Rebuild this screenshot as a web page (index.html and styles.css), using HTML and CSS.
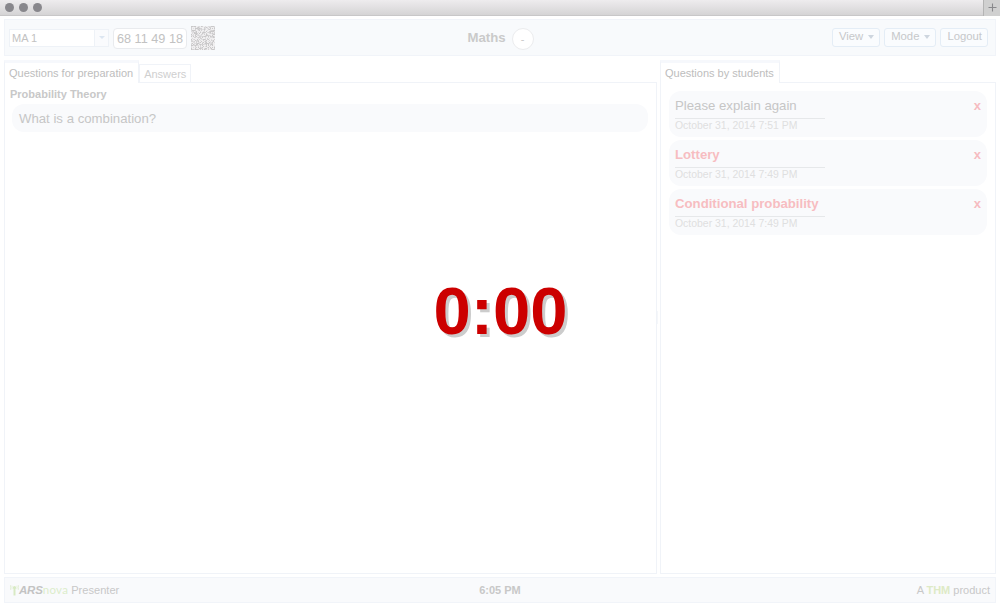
FILE: index.html
```html
<!DOCTYPE html>
<html lang="en">
<head>
<meta charset="utf-8">
<title>ARSnova Presenter</title>
<link rel="stylesheet" href="styles.css">
</head>
<body>
<div class="window">
  <div class="titlebar">
    <span class="dot"></span><span class="dot"></span><span class="dot"></span>
    <span class="newtab"><svg width="9" height="9" viewBox="0 0 9 9"><path d="M4.5 0.5V8.5M0.5 4.5H8.5" stroke="#88888b" stroke-width="1.1"/></svg></span>
  </div>
  <header class="bar header">
    <div class="session">
      <div class="select"><span class="value">MA 1</span><span class="arrow"><i class="caret small"></i></span></div>
      <div class="key">68 11 49 18</div>
      <svg class="qr" id="qr" width="24" height="24" viewBox="0 0 24 24" shape-rendering="crispEdges"></svg>
    </div>
    <div class="title"><b>Maths</b><span class="count">-</span></div>
    <nav class="actions">
      <button class="btn">View<i class="caret"></i></button>
      <button class="btn">Mode<i class="caret"></i></button>
      <button class="btn">Logout</button>
    </nav>
  </header>
  <main class="main">
    <section class="pane left">
      <div class="tabs"><div class="tab active">Questions for preparation</div><div class="tab idle">Answers</div></div>
      <div class="body">
        <h2 class="subject">Probability Theory</h2>
        <div class="question">What is a combination?</div>
      </div>
    </section>
    <div class="splitter"></div>
    <section class="pane right">
      <div class="tabs"><div class="tab active">Questions by students</div></div>
      <div class="body list">
        <article class="card"><div class="row"><span>Please explain again</span><b class="x">x</b></div><div class="date">October 31, 2014 7:51 PM</div></article>
        <article class="card unread"><div class="row"><span>Lottery</span><b class="x">x</b></div><div class="date">October 31, 2014 7:49 PM</div></article>
        <article class="card unread"><div class="row"><span>Conditional probability</span><b class="x">x</b></div><div class="date">October 31, 2014 7:49 PM</div></article>
      </div>
    </section>
  </main>
  <footer class="bar footer">
    <div class="brand">
      <svg width="9" height="12" viewBox="0 0 9 12" fill="none" stroke="#d8eac4"><path d="M4.5 4V11.5" stroke-width="2"/><circle cx="4.5" cy="3.5" r="1.6" fill="#d8eac4" stroke="none"/><path d="M2.2 1.8Q1.4 3.5 2.2 5.2M6.8 1.8Q7.6 3.5 6.8 5.2M.8 1Q-.2 3.5 .8 6M8.2 1Q9.2 3.5 8.2 6" stroke-width=".6"/></svg>
      <span class="ars">ARS</span><span class="nova">nova</span><span class="presenter">Presenter</span>
    </div>
    <b class="clock">6:05 PM</b>
    <div class="credit">A <b>THM</b> product</div>
  </footer>
  <div class="timer">0:00</div>
</div>
<script src="qr.js"></script>
</body>
</html>
```
FILE: styles.css
```css
* { box-sizing: border-box; }
body { margin: 0; background: #fff; font-family: "Liberation Sans", Arial, sans-serif; font-size: 11px; color: #c2c2c2; }
.window { position: relative; height: 606px; display: flex; flex-direction: column; overflow: hidden; }
.titlebar { height: 16px; flex: none; display: flex; align-items: center; gap: 5px; padding-left: 5px; background: linear-gradient(#eeecee, #d5d4d5); border-bottom: 1px solid #c8c7c8; }
.dot { width: 9px; height: 9px; border-radius: 50%; background: #88878c; }
.newtab { margin-left: auto; width: 17px; height: 16px; background: #d0d0d0; border-left: 1px solid #b4b4b4; display: flex; align-items: center; justify-content: center; }
.bar { margin: 0 4px; flex: none; background: #f9fafc; border: 1px solid #f1f4f9; display: grid; align-items: center; }
.header { height: 37px; margin-top: 3px; grid-template-columns: 1fr auto 1fr; background: #f8fafc; }
.session { display: flex; align-items: center; padding-left: 4px; }
.select { display: flex; width: 100px; height: 18px; background: #fff; border: 1px solid #eef2f7; line-height: 16px; }
.value { flex: 1; padding-left: 2px; font-size: 11px; }
.arrow { width: 14px; border-left: 1px solid #eef2f7; background: #fafbfd; display: flex; align-items: center; justify-content: center; }
.caret { width: 0; height: 0; border: solid transparent; border-width: 4px 3.5px 0; border-top-color: #ced6df; }
.caret.small { border-width: 3px 3px 0; border-top-color: #dce6f1; }
.key { margin: 1px 0 0 4px; width: 74px; height: 21px; border: 1px solid #e9ebee; border-radius: 4px; background: #fff; font-size: 12.7px; line-height: 20px; text-align: center; white-space: nowrap; }
.qr { margin-left: 4px; background: #f0eff0; }
.title { display: flex; align-items: center; gap: 6px; font-size: 13.2px; color: #cacaca; padding-left: 1px; }
.count { width: 22px; height: 22px; border: 1px solid #ebecee; border-radius: 50%; background: #fff; text-align: center; line-height: 20px; font-size: 11px; margin-top: 3px; }
.actions { display: flex; justify-content: flex-end; gap: 4px; padding-right: 7px; margin-top: -1px; }
.btn { height: 19px; border: 1px solid #e4edf6; border-radius: 3px; background: #fafcfe; color: #c6c8ca; font: 11.3px/13px "Liberation Sans", Arial, sans-serif; padding: 0 5px 1px 6px; display: flex; align-items: center; gap: 5px; }
.main { flex: 1; min-height: 0; display: flex; margin: 5px 4px 3px; }
.pane { display: flex; flex-direction: column; }
.left { width: 653px; }
.right { flex: 1; }
.splitter { width: 3px; height: 13px; align-self: center; border-left: 1px solid #f5f7fa; }
.tabs { position: relative; z-index: 1; height: 22px; display: flex; align-items: flex-end; margin-bottom: -1px; flex: none; }
.tab { border: 1px solid #f0f3f8; white-space: nowrap; background: #fff; }
.tab.active { height: 23px; line-height: 21px; padding: 0 5px 0 4px; border-bottom: 0; border-top: 3px solid #f6f8fc; color: #bdbdbd; }
.tab.idle { height: 19px; line-height: 18px; padding: 0 4px; color: #cfcfcf; }
.body { flex: 1; border: 1px solid #f0f3f8; }
.left .body { padding: 4px 8px 0 5px; }
.subject { margin: 0; font-size: 11px; line-height: 14px; color: #c8c8c8; }
.question { margin: 3px 0 0 2px; height: 28px; padding-left: 7px; border-radius: 12px; background: #f9fafc; font-size: 13.2px; line-height: 29px; color: #c6c6c6; }
.list { padding: 8px 8px 0; display: flex; flex-direction: column; gap: 3px; }
.card { height: 46px; padding: 5px 6px 0; border-radius: 12px; background: #f9fafc; }
.row { display: flex; justify-content: space-between; font-size: 13.2px; line-height: 20px; color: #c6c6c6; }
.x { color: #f6bcc1; font-size: 13px; }
.unread .row span { color: #f7bdc1; font-weight: bold; }
.date { width: 150px; margin-top: 2px; border-top: 1px solid #e6e8ea; font-size: 10.45px; line-height: 13px; color: #dfdfe0; white-space: nowrap; }
.footer { height: 26px; margin-bottom: 3px; grid-template-columns: 1fr auto 1fr; padding: 0 5px; color: #c8c8c8; }
.brand { display: flex; align-items: center; }
.ars { font: italic bold 11.5px "Liberation Sans", Arial, sans-serif; letter-spacing: -.2px; color: #c3c3c3; }
.nova { font: 11.5px Lato, sans-serif; color: #dcedcb; letter-spacing: .3px; margin-top: -1px; }
.presenter { margin-left: 3px; font-size: 11.1px; }
.credit { text-align: right; }
.credit b { color: #deeac6; }
.timer { position: absolute; left: 1px; right: 0; top: 273px; text-align: center; font-weight: bold; font-size: 67px; line-height: 76px; color: #c00; text-shadow: 3px 3px 0 #ccc; }
```
FILE: qr.js
```js
const svg = document.getElementById("qr");
const size = 24;
let seed = 68114918;
const next = () => (seed = (seed * 48271) % 2147483647) / 2147483647;
const finder = (x, y) => {
  const d = Math.max(Math.abs(x - 2), Math.abs(y - 2));
  return d === 2 || d === 0;
};
const shades = ["#c9c8c9", "#d4d3d4", "#dedddf"];
let markup = "";
for (let y = 0; y < size; y++) {
  for (let x = 0; x < size; x++) {
    const left = x < 5, right = x > 18, top = y < 5, bottom = y > 18;
    let on;
    if ((left && (top || bottom)) || (right && top)) on = finder(right ? 23 - x : x, bottom ? 23 - y : y);
    else on = next() > 0.4;
    if (on) markup += `<rect x="${x}" y="${y}" width="1" height="1" fill="${shades[Math.floor(next() * 3)]}"/>`;
  }
}
svg.innerHTML = markup;
```
